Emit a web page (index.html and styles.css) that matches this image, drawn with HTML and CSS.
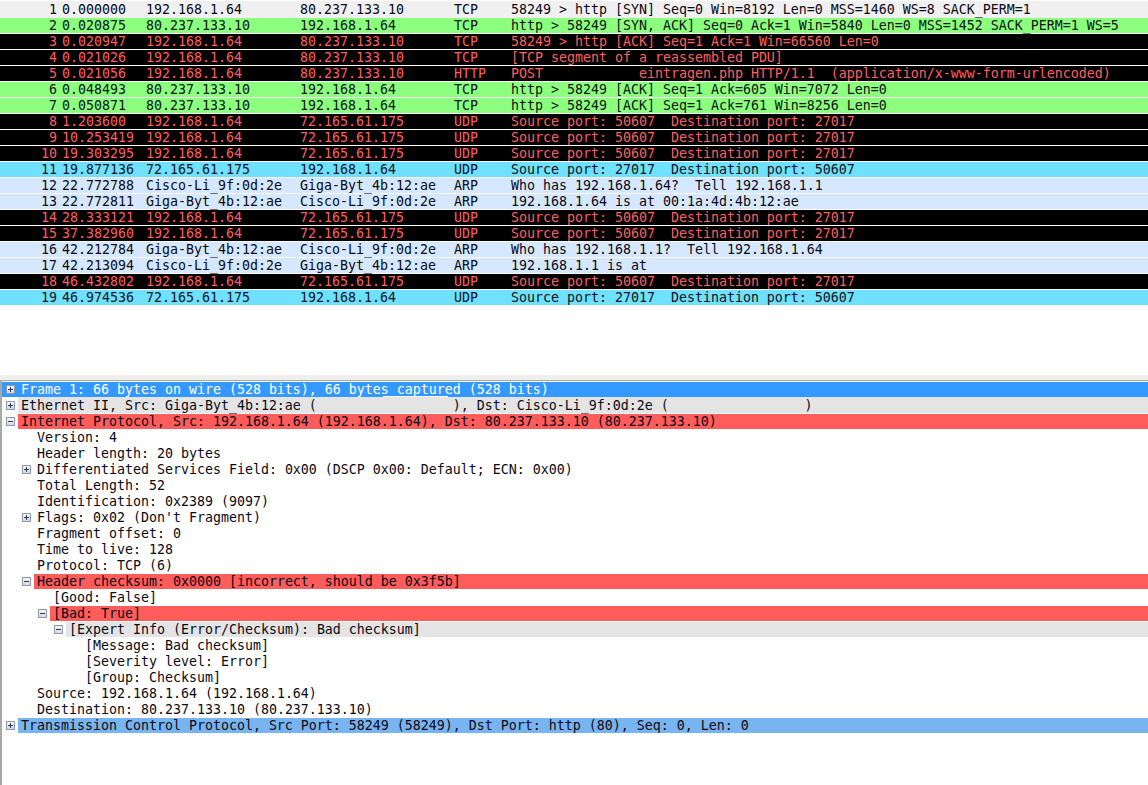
FILE: index.html
```html
<!DOCTYPE html>
<html lang="en">
<head>
<meta charset="utf-8">
<title>Wireshark capture</title>
<link rel="stylesheet" href="styles.css">
</head>
<body>
<main class="app">
<section class="packets">
<div class="pkt first syn"><span class="no">1</span><span class="time">0.000000</span><span class="src">192.168.1.64</span><span class="dst">80.237.133.10</span><span class="proto">TCP</span><span class="info">58249 &gt; http [SYN] Seq=0 Win=8192 Len=0 MSS=1460 WS=8 SACK_PERM=1</span></div>
<div class="pkt green"><span class="no">2</span><span class="time">0.020875</span><span class="src">80.237.133.10</span><span class="dst">192.168.1.64</span><span class="proto">TCP</span><span class="info">http &gt; 58249 [SYN, ACK] Seq=0 Ack=1 Win=5840 Len=0 MSS=1452 SACK_PERM=1 WS=5</span></div>
<div class="pkt bad"><span class="no">3</span><span class="time">0.020947</span><span class="src">192.168.1.64</span><span class="dst">80.237.133.10</span><span class="proto">TCP</span><span class="info">58249 &gt; http [ACK] Seq=1 Ack=1 Win=66560 Len=0</span></div>
<div class="pkt bad"><span class="no">4</span><span class="time">0.021026</span><span class="src">192.168.1.64</span><span class="dst">80.237.133.10</span><span class="proto">TCP</span><span class="info">[TCP segment of a reassembled PDU]</span></div>
<div class="pkt bad"><span class="no">5</span><span class="time">0.021056</span><span class="src">192.168.1.64</span><span class="dst">80.237.133.10</span><span class="proto">HTTP</span><span class="info">POST            eintragen.php HTTP/1.1  (application/x-www-form-urlencoded)</span></div>
<div class="pkt green"><span class="no">6</span><span class="time">0.048493</span><span class="src">80.237.133.10</span><span class="dst">192.168.1.64</span><span class="proto">TCP</span><span class="info">http &gt; 58249 [ACK] Seq=1 Ack=605 Win=7072 Len=0</span></div>
<div class="pkt green"><span class="no">7</span><span class="time">0.050871</span><span class="src">80.237.133.10</span><span class="dst">192.168.1.64</span><span class="proto">TCP</span><span class="info">http &gt; 58249 [ACK] Seq=1 Ack=761 Win=8256 Len=0</span></div>
<div class="pkt bad"><span class="no">8</span><span class="time">1.203600</span><span class="src">192.168.1.64</span><span class="dst">72.165.61.175</span><span class="proto">UDP</span><span class="info">Source port: 50607  Destination port: 27017</span></div>
<div class="pkt bad"><span class="no">9</span><span class="time">10.253419</span><span class="src">192.168.1.64</span><span class="dst">72.165.61.175</span><span class="proto">UDP</span><span class="info">Source port: 50607  Destination port: 27017</span></div>
<div class="pkt bad"><span class="no">10</span><span class="time">19.303295</span><span class="src">192.168.1.64</span><span class="dst">72.165.61.175</span><span class="proto">UDP</span><span class="info">Source port: 50607  Destination port: 27017</span></div>
<div class="pkt cyan"><span class="no">11</span><span class="time">19.877136</span><span class="src">72.165.61.175</span><span class="dst">192.168.1.64</span><span class="proto">UDP</span><span class="info">Source port: 27017  Destination port: 50607</span></div>
<div class="pkt arp"><span class="no">12</span><span class="time">22.772788</span><span class="src">Cisco-Li_9f:0d:2e</span><span class="dst">Giga-Byt_4b:12:ae</span><span class="proto">ARP</span><span class="info">Who has 192.168.1.64?  Tell 192.168.1.1</span></div>
<div class="pkt arp"><span class="no">13</span><span class="time">22.772811</span><span class="src">Giga-Byt_4b:12:ae</span><span class="dst">Cisco-Li_9f:0d:2e</span><span class="proto">ARP</span><span class="info">192.168.1.64 is at 00:1a:4d:4b:12:ae</span></div>
<div class="pkt bad"><span class="no">14</span><span class="time">28.333121</span><span class="src">192.168.1.64</span><span class="dst">72.165.61.175</span><span class="proto">UDP</span><span class="info">Source port: 50607  Destination port: 27017</span></div>
<div class="pkt bad"><span class="no">15</span><span class="time">37.382960</span><span class="src">192.168.1.64</span><span class="dst">72.165.61.175</span><span class="proto">UDP</span><span class="info">Source port: 50607  Destination port: 27017</span></div>
<div class="pkt arp"><span class="no">16</span><span class="time">42.212784</span><span class="src">Giga-Byt_4b:12:ae</span><span class="dst">Cisco-Li_9f:0d:2e</span><span class="proto">ARP</span><span class="info">Who has 192.168.1.1?  Tell 192.168.1.64</span></div>
<div class="pkt arp"><span class="no">17</span><span class="time">42.213094</span><span class="src">Cisco-Li_9f:0d:2e</span><span class="dst">Giga-Byt_4b:12:ae</span><span class="proto">ARP</span><span class="info">192.168.1.1 is at</span></div>
<div class="pkt bad"><span class="no">18</span><span class="time">46.432802</span><span class="src">192.168.1.64</span><span class="dst">72.165.61.175</span><span class="proto">UDP</span><span class="info">Source port: 50607  Destination port: 27017</span></div>
<div class="pkt cyan"><span class="no">19</span><span class="time">46.974536</span><span class="src">72.165.61.175</span><span class="dst">192.168.1.64</span><span class="proto">UDP</span><span class="info">Source port: 27017  Destination port: 50607</span></div>
</section>
<div class="sash"></div>
<section class="details">
<div class="node l0 selected"><span class="gutter"><i class="exp plus"></i></span><span class="label">Frame 1: 66 bytes on wire (528 bits), 66 bytes captured (528 bits)</span><span class="smudge"></span></div>
<div class="node l0"><span class="gutter"><i class="exp plus"></i></span><span class="label grey">Ethernet II, Src: Giga-Byt_4b:12:ae (                 ), Dst: Cisco-Li_9f:0d:2e (                 )</span></div>
<div class="node l0"><span class="gutter"><i class="exp minus"></i></span><span class="label red">Internet Protocol, Src: 192.168.1.64 (192.168.1.64), Dst: 80.237.133.10 (80.237.133.10)</span></div>
<div class="node l1"><span class="gutter"></span><span class="label">Version: 4</span></div>
<div class="node l1"><span class="gutter"></span><span class="label">Header length: 20 bytes</span></div>
<div class="node l1"><span class="gutter"><i class="exp plus"></i></span><span class="label">Differentiated Services Field: 0x00 (DSCP 0x00: Default; ECN: 0x00)</span></div>
<div class="node l1"><span class="gutter"></span><span class="label">Total Length: 52</span></div>
<div class="node l1"><span class="gutter"></span><span class="label">Identification: 0x2389 (9097)</span></div>
<div class="node l1"><span class="gutter"><i class="exp plus"></i></span><span class="label">Flags: 0x02 (Don't Fragment)</span></div>
<div class="node l1"><span class="gutter"></span><span class="label">Fragment offset: 0</span></div>
<div class="node l1"><span class="gutter"></span><span class="label">Time to live: 128</span></div>
<div class="node l1"><span class="gutter"></span><span class="label">Protocol: TCP (6)</span></div>
<div class="node l1"><span class="gutter"><i class="exp minus"></i></span><span class="label red">Header checksum: 0x0000 [incorrect, should be 0x3f5b]</span></div>
<div class="node l2"><span class="gutter"></span><span class="label">[Good: False]</span></div>
<div class="node l2"><span class="gutter"><i class="exp minus"></i></span><span class="label red">[Bad: True]</span></div>
<div class="node l3"><span class="gutter"><i class="exp minus"></i></span><span class="label grey">[Expert Info (Error/Checksum): Bad checksum]</span></div>
<div class="node l4"><span class="gutter"></span><span class="label">[Message: Bad checksum]</span></div>
<div class="node l4"><span class="gutter"></span><span class="label">[Severity level: Error]</span></div>
<div class="node l4"><span class="gutter"></span><span class="label">[Group: Checksum]</span></div>
<div class="node l1"><span class="gutter"></span><span class="label">Source: 192.168.1.64 (192.168.1.64)</span></div>
<div class="node l1"><span class="gutter"></span><span class="label">Destination: 80.237.133.10 (80.237.133.10)</span></div>
<div class="node l0"><span class="gutter"><i class="exp plus"></i></span><span class="label tcp">Transmission Control Protocol, Src Port: 58249 (58249), Dst Port: http (80), Seq: 0, Len: 0</span></div>
</section>
</main>
</body>
</html>
```

FILE: styles.css
```css
* { box-sizing: border-box; }
html, body { margin: 0; padding: 0; background: #fff; }
body { height: 785px; overflow: hidden; }
.app {
  display: flex;
  flex-direction: column;
  height: 785px;
  font-family: "DejaVu Sans Mono", "Liberation Mono", monospace;
  font-size: 13.29px;
  line-height: 15px;
  color: #000;
}
.packets { height: 375px; padding-top: 1px; flex: none; }
.pkt { display: flex; height: 16px; border-bottom: 1px solid #fff; }
.pkt.first { height: 17px; padding-top: 1px; border-bottom: 0; }
.pkt span { position: relative; }
.no { width: 57px; text-align: right; flex: none; }
.time { width: 89px; padding-left: 5px; flex: none; }
.src { width: 154px; flex: none; }
.dst { width: 154px; flex: none; }
.proto { width: 57px; flex: none; }
.info { flex: 1; white-space: pre; }
.syn { background: #f0f0f0; color: #0a0a14; }
.green { background: #8dff7f; color: #0a1414; }
.bad { background: #000; color: #ff5f5f; }
.cyan { background: #70e0ff; color: #0a1420; }
.arp { background: #d6e8ff; color: #0a0a14; }
.sash { height: 5px; background: #efefef; flex: none; }
.details {
  flex: 1;
  border-left: 2px solid #a8a8a8;
  border-top: 1px solid #a8a8a8;
}
.node { display: flex; height: 16px; padding-top: 1px; position: relative; }
.l1 { padding-left: 16px; }
.l2 { padding-left: 32px; }
.l3 { padding-left: 48px; }
.l4 { padding-left: 64px; }
.gutter { width: 16px; flex: none; display: flex; align-items: center; justify-content: center; }
.label { flex: 1; padding-left: 3px; color: #0a0a14; white-space: pre; }
.selected { background: #3399ff; background-clip: content-box; }
.selected .label { color: #fff; }
.selected + .node .label { margin-top: -1px; padding-top: 1px; }
.grey { background: #e4e4e4; }
.red { background: #ff5c5c; }
.tcp { background: #78b4f0; }
.smudge { position: absolute; left: 381px; bottom: 0; width: 65px; height: 1px; background: #fff; }
.exp {
  display: block;
  position: relative;
  width: 9px;
  height: 9px;
  border: 1px solid #8f98a8;
  background: linear-gradient(#fafafa, #d8d8dc);
}
.exp::before {
  content: "";
  position: absolute;
  left: 1px;
  top: 3px;
  width: 5px;
  height: 1px;
  background: #2a3560;
}
.plus::after {
  content: "";
  position: absolute;
  left: 3px;
  top: 1px;
  width: 1px;
  height: 5px;
  background: #2a3560;
}
```
